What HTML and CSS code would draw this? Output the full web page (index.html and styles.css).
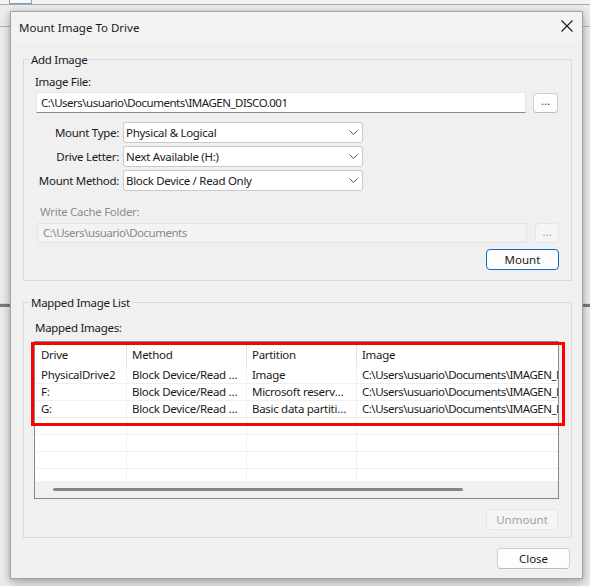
FILE: index.html
```html
<!DOCTYPE html>
<html>
<head>
<meta charset="utf-8">
<link rel="stylesheet" href="styles.css">
</head>
<body>
<div class="desktop">
  <div class="bg-top"><div class="bg-tab"></div></div>
  <div class="bg-line1"></div>
  <div class="bg-band"></div>

  <div class="dialog">
    <div class="titlebar">
      <span class="title">Mount Image To Drive</span>
      <svg class="close" width="12" height="12" viewBox="0 0 12 12"><path d="M0.5 0.5 L11.5 11.5 M11.5 0.5 L0.5 11.5" stroke="#1a1a1a" stroke-width="1.1" fill="none"/></svg>
    </div>
    <div class="body">
      <fieldset class="group g1">
        <legend>Add Image</legend>
        <div class="lbl">Image File:</div>
        <div class="filerow">
          <div class="input path">C:\Users\usuario\Documents\IMAGEN_DISCO.001</div>
          <div class="btn dots">...</div>
        </div>
        <div class="form">
          <div class="flabel">Mount Type:</div>
          <div class="select">Physical &amp; Logical<svg class="chev" width="9" height="5" viewBox="0 0 9 5"><path d="M0.5 0.5 L4.5 4.5 L8.5 0.5" stroke="#5a5a5a" stroke-width="1" fill="none"/></svg></div>
          <div class="flabel">Drive Letter:</div>
          <div class="select">Next Available (H:)<svg class="chev" width="9" height="5" viewBox="0 0 9 5"><path d="M0.5 0.5 L4.5 4.5 L8.5 0.5" stroke="#5a5a5a" stroke-width="1" fill="none"/></svg></div>
          <div class="flabel">Mount Method:</div>
          <div class="select">Block Device / Read Only<svg class="chev" width="9" height="5" viewBox="0 0 9 5"><path d="M0.5 0.5 L4.5 4.5 L8.5 0.5" stroke="#5a5a5a" stroke-width="1" fill="none"/></svg></div>
        </div>
        <div class="lbl lbl-dis">Write Cache Folder:</div>
        <div class="filerow filerow-dis">
          <div class="input input-dis path">C:\Users\usuario\Documents</div>
          <div class="btn dots btn-dis">...</div>
        </div>
        <div class="actions">
          <div class="btn primary">Mount</div>
        </div>
      </fieldset>

      <fieldset class="group g2">
        <legend>Mapped Image List</legend>
        <div class="lbl lbl2">Mapped Images:</div>
        <div class="listview">
          <div class="lv-inner">
            <div class="lv-row lv-head">
              <div class="c c1">Drive</div><div class="c c2">Method</div><div class="c c3">Partition</div><div class="c c4">Image</div>
            </div>
            <div class="lv-row">
              <div class="c c1">PhysicalDrive2</div><div class="c c2">Block Device/Read Only</div><div class="c c3">Image</div><div class="c c4 path">C:\Users\usuario\Documents\IMAGEN_DISCO.001</div>
            </div>
            <div class="lv-row">
              <div class="c c1">F:</div><div class="c c2">Block Device/Read Only</div><div class="c c3">Microsoft reserved partition</div><div class="c c4 path">C:\Users\usuario\Documents\IMAGEN_DISCO.001</div>
            </div>
            <div class="lv-row">
              <div class="c c1">G:</div><div class="c c2">Block Device/Read Only</div><div class="c c3">Basic data partition</div><div class="c c4 path">C:\Users\usuario\Documents\IMAGEN_DISCO.001</div>
            </div>
            <div class="lv-row"><div class="c c1"></div><div class="c c2"></div><div class="c c3"></div><div class="c c4"></div></div>
            <div class="lv-row"><div class="c c1"></div><div class="c c2"></div><div class="c c3"></div><div class="c c4"></div></div>
            <div class="lv-row"><div class="c c1"></div><div class="c c2"></div><div class="c c3"></div><div class="c c4"></div></div>
            <div class="lv-row lv-last"><div class="c c1"></div><div class="c c2"></div><div class="c c3"></div><div class="c c4"></div></div>
          </div>
          <div class="hscroll"><div class="thumb"></div></div>
        </div>
        <div class="actions actions2">
          <div class="btn btn-dis unmount">Unmount</div>
        </div>
      </fieldset>

      <div class="footer">
        <div class="btn closebtn">Close</div>
      </div>
    </div>
  </div>

  <div class="highlight"></div>
</div>
</body>
</html>
```

FILE: styles.css
```css
* { box-sizing: border-box; }
html, body { margin: 0; padding: 0; }
body {
  font-family: "Noto Sans", "Open Sans", sans-serif;
  font-size: 11.5px;
  letter-spacing: -0.3px;
  color: #000;
  background: #f0f0f0;
}
.desktop {
  position: relative;
  width: 590px;
  height: 586px;
  overflow: hidden;
  background: #ececec;
}
.bg-top {
  height: 5px;
  border-bottom: 1px solid #a9a9a9;
  background: #f3f3f3;
}
.bg-tab {
  margin-left: 9px;
  width: 23px;
  height: 4px;
  border: 1px solid #7f9dc4;
  border-top: none;
  background: #f9f9f9;
}
.bg-line1 {
  margin-top: 21px;
  height: 1px;
  background: #b5b5b5;
}
.bg-band {
  margin-top: 276px;
  height: 4px;
  border-top: 1px solid #d8d8d8;
  background: #7a7a7a;
}

.dialog {
  position: absolute;
  left: 10px;
  top: 11px;
  width: 573px;
  height: 568px;
  border: 1px solid #a3a3a3;
  background: #f0f0f0;
  box-shadow: 0 4px 10px rgba(0,0,0,0.28), 0 0 4px rgba(0,0,0,0.12);
  display: flex;
  flex-direction: column;
}
.titlebar {
  height: 30px;
  display: flex;
  align-items: center;
  justify-content: space-between;
  padding-left: 8px;
  padding-right: 9px;
  background: #f3f3f3;
}
.title { color: #1a1a1a; letter-spacing: 0; }
.close { display: block; margin-top: -2px; }

.body {
  padding: 10px 10px 0 12px;
  display: flex;
  flex-direction: column;
}
.group {
  margin: 0;
  padding: 0;
  border: 1px solid #dadada;
  min-width: 0;
  display: flex;
  flex-direction: column;
}
.group legend {
  margin-left: 5px;
  padding: 0 2px;
  line-height: 15px;
  color: #1a1a1a;
}
.lbl {
  line-height: 16px;
  padding-left: 11px;
  margin-top: 7px;
  color: #1a1a1a;
}
.lbl-dis {
  color: #8e8e8e;
  padding-left: 16px;
  margin-top: 13px;
}
.lbl2 { margin-top: 10px; }
.path { letter-spacing: -0.5px; }

.filerow {
  display: flex;
  align-items: center;
  margin-top: 2px;
  margin-left: 12px;
  gap: 7px;
}
.input {
  width: 490px;
  height: 21px;
  background: #fff;
  border: 1px solid #e6e6e6;
  border-bottom: 1px solid #8a8a8a;
  padding-left: 4px;
  line-height: 19px;
  white-space: nowrap;
  overflow: hidden;
  color: #1a1a1a;
}
.filerow-dis { margin-top: 3px; margin-left: 13px; gap: 8px; }
.input-dis {
  height: 20px;
  background: #f3f3f3;
  border: 1px solid #e3e3e3;
  color: #8a8a8a;
  line-height: 18px;
  padding-left: 5px;
}
.btn {
  height: 21px;
  border: 1px solid #d0d0d0;
  border-bottom-color: #bcbcbc;
  border-radius: 4px;
  background: #fdfdfd;
  display: flex;
  align-items: center;
  justify-content: center;
  line-height: 16px;
  color: #1a1a1a;
  letter-spacing: 0;
}
.dots { width: 25px; height: 20px; color: #6a2a8a; padding-bottom: 3px; }
.btn-dis {
  background: #f5f5f5;
  border-color: #e5e5e5;
  color: #a0a0a0;
}
.filerow-dis .dots { width: 24px; color: #a0a0a0; }
.primary {
  width: 73px;
  border: 1px solid #0a6cc4;
  background: #fdfdfd;
}

.form {
  margin-top: 9px;
  display: grid;
  grid-template-columns: 95px 240px;
  column-gap: 4px;
  row-gap: 3px;
  align-items: center;
}
.flabel {
  text-align: right;
  color: #1a1a1a;
  line-height: 16px;
}
.select {
  height: 21px;
  background: #fff;
  border: 1px solid #c9c9c9;
  border-radius: 3px;
  padding-left: 2px;
  display: flex;
  align-items: center;
  justify-content: space-between;
  padding-right: 4px;
  color: #1a1a1a;
}
.chev { display: block; }

.actions {
  display: flex;
  justify-content: flex-end;
  margin-top: 6px;
  margin-right: 12px;
  margin-bottom: 10px;
}

.g2 { margin-top: 14px; }
.listview {
  margin-top: 5px;
  margin-left: 10px;
  width: 525px;
  height: 158px;
  border: 1px solid #828790;
  background: #fff;
  display: flex;
  flex-direction: column;
}
.lv-inner {
  flex: 1;
  overflow: hidden;
}
.lv-row {
  display: flex;
  height: 17px;
  border-bottom: 1px solid #f0f0f0;
  white-space: nowrap;
}
.lv-head {
  height: 25px;
  border-bottom: none;
}
.lv-last { border-bottom: none; }
.c {
  flex: none;
  overflow: hidden;
  text-overflow: ellipsis;
  padding-left: 5px;
  padding-right: 5px;
  line-height: 16px;
  border-right: 1px solid #f0f0f0;
  color: #1a1a1a;
}
.lv-head .c {
  line-height: 22px;
  padding-top: 2px;
  border-right-color: #e5e5e5;
}
.c1 { width: 92px; padding-left: 6px; }
.c2 { width: 120px; }
.c3 { width: 110px; padding-right: 9px; }
.c4 { width: 260px; text-overflow: clip; padding-left: 5px; }
.hscroll {
  height: 17px;
  background: #f0f0f0;
  display: flex;
  align-items: center;
}
.thumb {
  margin-left: 18px;
  width: 410px;
  height: 3px;
  border-radius: 2px;
  background: #858585;
}
.actions2 { margin-top: 10px; margin-right: 13px; margin-bottom: 7px; }
.unmount { width: 72px; }

.footer {
  display: flex;
  justify-content: flex-end;
  margin-top: 10px;
  margin-right: 2px;
}
.closebtn { width: 73px; }

.highlight {
  position: absolute;
  left: 31px;
  top: 342px;
  width: 534px;
  height: 84px;
  border: 3px solid #ff0000;
}
```
